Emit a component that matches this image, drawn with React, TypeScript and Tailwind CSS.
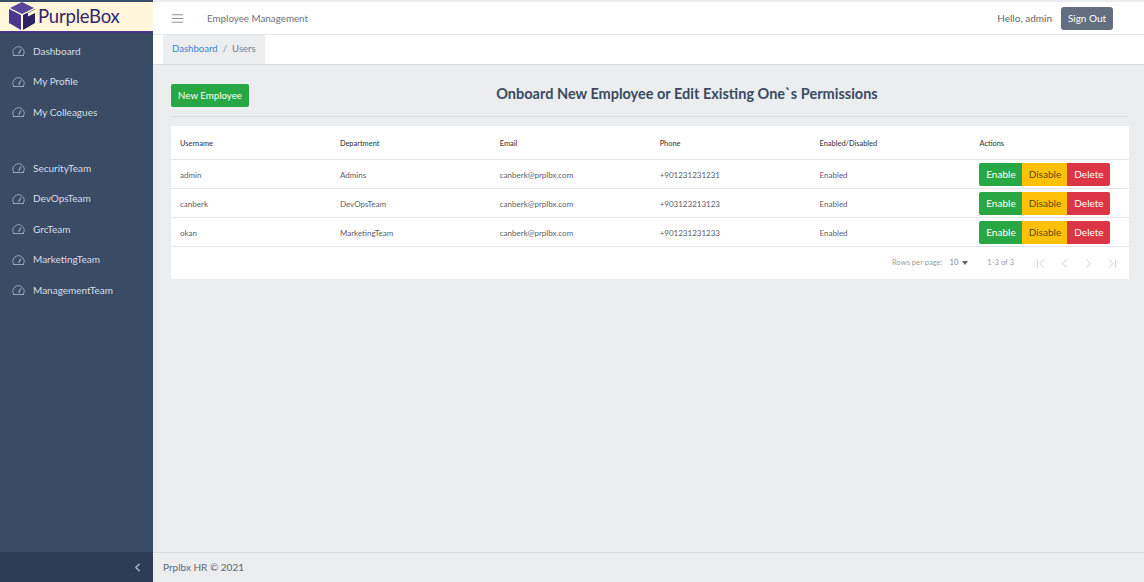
import { ChevronFirst, ChevronLast, ChevronLeft, ChevronRight, Menu } from "lucide-react";

const topLinks = ["Dashboard", "My Profile", "My Colleagues"];
const teamLinks = ["SecurityTeam", "DevOpsTeam", "GrcTeam", "MarketingTeam", "ManagementTeam"];

const users = [
  { name: "admin", dept: "Admins", email: "canberk@prplbx.com", phone: "+901231231231" },
  { name: "canberk", dept: "DevOpsTeam", email: "canberk@prplbx.com", phone: "+903123213123" },
  { name: "okan", dept: "MarketingTeam", email: "canberk@prplbx.com", phone: "+901231231233" },
];

function GaugeIcon() {
  return (
    <svg width="13" height="10" viewBox="0 0 13 10" fill="none" stroke="#9aa5b5" strokeWidth="1" className="shrink-0">
      <path d="M2 9.5 A5.5 5.5 0 1 1 11 9.5" />
      <path d="M1 9.5 H12" />
      <path d="M6.5 8 L9 3.5" strokeWidth="1.3" />
    </svg>
  );
}

function NavItem({ label }: { label: string }) {
  return (
    <div className="flex h-[30.6px] items-center pl-[12px] text-[10px] text-[#d8dde5]">
      <GaugeIcon />
      <span className="ml-[8px]">{label}</span>
    </div>
  );
}

function Logo() {
  return (
    <svg width="28" height="29" viewBox="0 0 28 29" className="shrink-0">
      <polygon points="14,0 26,6 14,12 2,6" fill="#5a459c" />
      <polygon points="1,7 13,13 13,28 1,21" fill="#4a3789" />
      <polygon points="15,13 27,7 27,21 15,28" fill="#2f2263" />
      <polygon points="20,11 27,7.5 27,11 20,14.5" fill="#fff6dc" />
    </svg>
  );
}

export default function App() {
  return (
    <div className="flex h-[582px] w-[1144px] overflow-hidden bg-[#ebedef] font-['Lato','Open_Sans',sans-serif] text-[#4f5d73]">
      <aside className="flex w-[153px] shrink-0 flex-col bg-[#3a4b66]">
        <div className="mt-[2px] flex h-[31px] items-center gap-[2px] border-b-2 border-[#4a3789] bg-[#fff6dc] pl-[8px]">
          <Logo />
          <span className="text-[18.5px] leading-none tracking-[-0.2px] text-[#33256b]">PurpleBox</span>
        </div>
        <nav className="pt-[3px]">
          {topLinks.map((l) => (
            <NavItem key={l} label={l} />
          ))}
          <div className="h-[25px]" />
          {teamLinks.map((l) => (
            <NavItem key={l} label={l} />
          ))}
        </nav>
        <div className="mt-auto flex h-[30px] items-center justify-end bg-[#2f3c55] pr-[9px]">
          <ChevronLeft size={13} strokeWidth={3} className="text-[#a3adbc]" />
        </div>
      </aside>

      <div className="flex min-w-0 flex-1 flex-col">
        <header className="mt-[2px] flex h-[33px] items-center border-b border-[#e4e6ea] bg-white pl-[18px] pr-[31px] pt-[1px]">
          <Menu size={13} strokeWidth={1.6} className="scale-x-125 text-[#8a93a2]" />
          <span className="ml-[23px] text-[9.8px] text-[#6b7280]">Employee Management</span>
          <span className="ml-auto text-[10px] text-[#5f6670]">Hello, admin</span>
          <button className="ml-[9px] h-[23px] w-[52px] rounded-[3px] bg-[#636f7f] text-[10px] text-white">
            Sign Out
          </button>
        </header>

        <div className="flex h-[30px] border-b border-[#d8dbe0] bg-white pl-[10px]">
          <div className="flex items-center gap-[5px] rounded-t-[2px] bg-[#ebedef] px-[9px] text-[9.6px]">
            <span className="text-[#3b86d8]">Dashboard</span>
            <span className="text-[#8a93a2]">/</span>
            <span className="text-[#76818f]">Users</span>
          </div>
        </div>

        <main className="flex-1 pl-[18px] pr-[15px] pt-[19px]">
          <div className="flex h-[33px] items-start border-b border-[#d8dbe0]">
            <button className="h-[23px] w-[78px] rounded-[2px] bg-[#28a745] text-[9.7px] text-white">
              New Employee
            </button>
            <h2 className="flex-1 pr-[4px] text-center text-[14.5px] leading-[19px] font-bold text-[#3b4a60]">
              Onboard New Employee or Edit Existing One`s Permissions
            </h2>
          </div>

          <div className="mt-[9px] w-[958px] bg-white text-[8px] text-[#5c6068]">
            <div className="grid h-[34px] grid-cols-[repeat(6,159.9px)] items-center border-b border-[#e4e6ea] pl-[9px] pt-[2px] text-[7.4px] font-medium text-[#3c4048]">
              <span>Username</span>
              <span>Department</span>
              <span>Email</span>
              <span>Phone</span>
              <span>Enabled/Disabled</span>
              <span>Actions</span>
            </div>
            {users.map((u) => (
              <div key={u.name} className="grid h-[29px] grid-cols-[repeat(6,159.9px)] items-center border-b border-[#e4e6ea] pl-[9px]">
                <span className="pt-[1px]">{u.name}</span>
                <span className="pt-[1px]">{u.dept}</span>
                <span className="pt-[1px]">{u.email}</span>
                <span className="pt-[1px]">{u.phone}</span>
                <span className="pt-[1px]">Enabled</span>
                <div className="flex h-[23px] w-[131px] overflow-hidden rounded-[2px] text-[10px] leading-[23px]">
                  <span className="w-[43px] bg-[#28a745] text-center text-white">Enable</span>
                  <span className="w-[45px] bg-[#ffc107] text-center text-[#5d4a12]">Disable</span>
                  <span className="w-[43px] bg-[#dc3545] text-center text-white">Delete</span>
                </div>
              </div>
            ))}
            <div className="flex h-[32px] items-center justify-end pr-[9px] text-[7.6px] text-[#9aa0a8]">
              <span>Rows per page:</span>
              <span className="ml-[7px] text-[#7f858e]">10</span>
              <span className="ml-[4px] h-0 w-0 border-x-[3.5px] border-t-[4px] border-x-transparent border-t-[#5a6470]" />
              <span className="ml-[19px]">1-3 of 3</span>
              <div className="ml-[19px] flex gap-[9px] text-[#b9bec6]">
                <ChevronFirst size={15} strokeWidth={1.2} />
                <ChevronLeft size={15} strokeWidth={1.2} />
                <ChevronRight size={15} strokeWidth={1.2} />
                <ChevronLast size={15} strokeWidth={1.2} />
              </div>
            </div>
          </div>
        </main>

        <footer className="flex h-[30px] items-center border-t border-[#d8dbe0] pl-[10px] text-[10px] text-[#5f6670]">
          Prplbx HR © 2021
        </footer>
      </div>
    </div>
  );
}
